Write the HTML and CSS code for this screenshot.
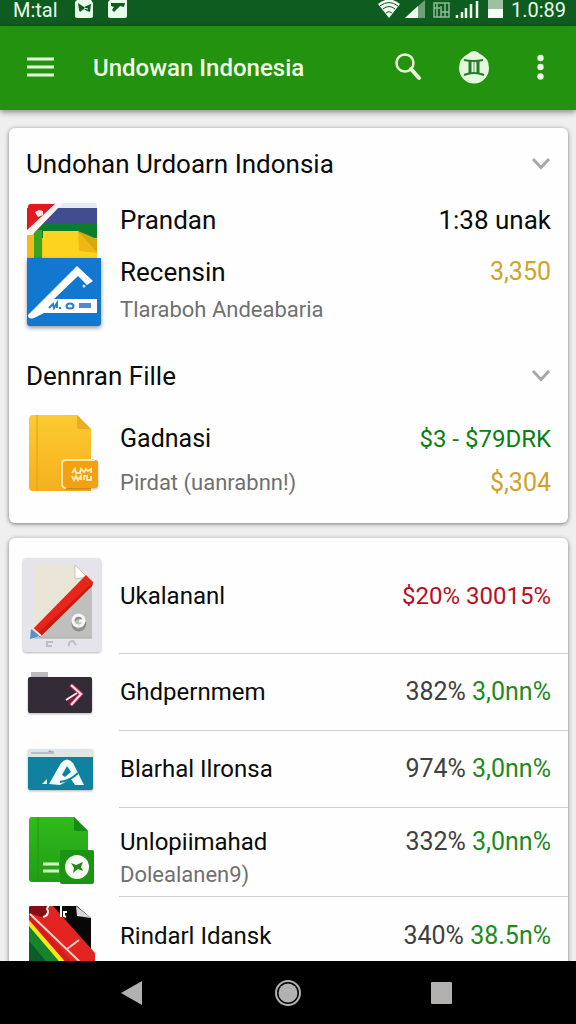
FILE: index.html
```html
<!DOCTYPE html>
<html lang="id">
<head>
<meta charset="utf-8">
<meta name="viewport" content="width=device-width, initial-scale=1">
<title>Undowan Indonesia</title>
<link rel="stylesheet" href="styles.css">
</head>
<body>
<div class="status">
  <span class="status-text">M:tal</span>
  <svg class="status-left" width="60" height="26" viewBox="70 0 60 26" aria-hidden="true">
    <path d="M77 0H91L93 3V16Q93 18 91 18H77Q75 18 75 16V2Z" fill="#e9fbe9"/>
    <path d="M78 3L84 7L91 4L90 12L87 11L84 9L80 12L79 10Z" fill="#0e5a20"/>
    <path d="M84 8L88 9" stroke="#e9fbe9"/>
    <path d="M110 0H127V16Q127 18 125 18H110Q108 18 108 16V2Z" fill="#e9fbe9"/>
    <path d="M111 3H125L124 7L120 6L117 9L114 12L112 10L114 7L111 6Z" fill="#0e5a20"/>
  </svg>
  <svg class="status-right" width="128" height="26" viewBox="376 0 128 26" aria-hidden="true">
    <path d="M378 4Q389 -5 400 4L389 18Z" fill="#f0fbf0"/>
    <path d="M380 6Q389 -1 398 6M383 9Q389 4 395 9M386 13Q389 10 392 13" fill="none" stroke="#0e5a20" stroke-width="1"/>
    <path d="M405 18L425 0V18Z" fill="#6fa07a"/><path d="M405 18L418 6V18Z" fill="#f0fbf0"/>
    <path d="M434 3H449V17H434ZM437 3V17M441 6V17M445 3V17M434 8H440M441 12H449" fill="none" stroke="#8dbb95" stroke-width="1.500"/>
    <path d="M457 18V15M462 18V12M466 18V8M471 18V4M477 18V1" stroke="#e9fbe9" stroke-width="2.500"/>
    <path d="M488 0H503V18H488Z" fill="#f5fff5"/><path d="M488 0H503V9H488Z" fill="#9fbfa5"/>
  </svg>
  <span class="status-text">1.0:89</span>
</div>

<header class="appbar">
  <button class="bar-button" aria-label="Menu">
    <svg width="30" height="30" viewBox="25 51 30 30"><path d="M27 57H54M27 65H54M27 73H54" stroke="#e8fbdc" stroke-width="3"/></svg>
  </button>
  <h1 class="title">Undowan Indonesia</h1>
  <div class="actions">
    <button class="bar-button" aria-label="Cari">
      <svg width="34" height="36" viewBox="391 48 34 36"><circle cx="404" cy="61" r="8.500" fill="none" stroke="#e8fbdc" stroke-width="2.500"/><path d="M410 67L418 76" stroke="#e8fbdc" stroke-width="4" stroke-linecap="round"/></svg>
    </button>
    <button class="bar-button" aria-label="Profil">
      <svg width="34" height="36" viewBox="458 49 34 36"><path d="M474 50Q477 50 480 53Q489 57 489 67A15 15.500 0 0 1 459 67Q459 57 468 53Q471 50 474 50Z" fill="#e4f8dc"/><path d="M464 59Q474 61 483 59M464 74Q474 70 484 74" fill="none" stroke="#26792a" stroke-width="2.200"/><path d="M470 60V72M478 60V72" stroke="#26792a" stroke-width="3"/><path d="M474 61V71" stroke="#5da158" stroke-width="1"/></svg>
    </button>
    <button class="bar-button" aria-label="Lainnya">
      <svg width="34" height="36" viewBox="524 49 34 36" fill="#e8fbdc"><circle cx="540.500" cy="57" r="3.200"/><circle cx="540.500" cy="66" r="3.200"/><circle cx="540.500" cy="75.500" r="3.200"/></svg>
    </button>
  </div>
</header>

<main class="content">
  <section class="card summary">
    <div class="heading">
      <h2 class="heading-text">Undohan Urdoarn Indonsia</h2>
      <button class="toggle" aria-label="Ciutkan bagian"><svg width="20" height="14" viewBox="0 0 20 14"><path d="M2 2L10 10.500L18 2" fill="none" stroke="#a8a8a8" stroke-width="3"/></svg></button>
    </div>
    <div class="group group-first">
      <svg class="icon" width="88" height="140" viewBox="18 194 88 140" aria-hidden="true">
        <path d="M30 203H96L97 206V260H27V206Q27 203 30 203Z" fill="#e6e9f5"/>
        <path d="M27 208H97V224H27Z" fill="#414d8e"/>
        <path d="M27 224H97V238H27Z" fill="#0b7d2c"/>
        <path d="M27 238H97V260H27Z" fill="#f7c51e"/>
        <path d="M43 231H78L97 253V260H43Z" fill="#fed31e"/>
        <path d="M78 231L97 239V253Z" fill="#d4a90d"/>
        <path d="M78 231L79 251L97 253Z" fill="#edb914"/>
        <path d="M34 230H42V260H34Z" fill="#39a51f"/>
        <path d="M27 235L34 230V260H27Z" fill="#f3bc1b"/>
        <path d="M31 204H60L28 234V207Q28 204 31 204Z" fill="#e11820"/>
        <path d="M56 203H63L32 235L27 235V230Z" fill="#fff4f2"/>
        <path d="M35 212L39 210L43 211L43 215L38 217L36 214Z" fill="#ffe8e4"/>
        <path class="drop" d="M27 258H101V323Q101 326 98 326H30Q27 326 27 323Z" fill="#1277cf"/>
        <path d="M28 315L77 266L93 281L87 285L78 276L54 299H97V313H44L34 318Q28 320 28 315Z" fill="#fff"/>
        <path d="M49 308L53 304L54 308L57 303V308M59 308H61" fill="none" stroke="#2580c8" stroke-width="2"/>
        <ellipse cx="70" cy="306" rx="3.500" ry="2.500" fill="none" stroke="#2580c8" stroke-width="2"/>
        <path d="M79 303H91V308H79Z" fill="#4b8dcc"/><circle cx="84" cy="286" r="1.500" fill="#cfe8ff"/>
      </svg>
      <div class="lines">
        <div class="line line-tall"><span class="name">Prandan</span><span class="value value-main">1:38 unak</span></div>
        <div class="line line-tall"><span class="name">Recensin</span><span class="value gold">3,350</span></div>
        <div class="sub">Tlaraboh Andeabaria</div>
      </div>
    </div>
    <div class="heading">
      <h2 class="heading-text">Dennran Fille</h2>
      <button class="toggle" aria-label="Ciutkan bagian"><svg width="20" height="14" viewBox="0 0 20 14"><path d="M2 2L10 10.500L18 2" fill="none" stroke="#a8a8a8" stroke-width="3"/></svg></button>
    </div>
    <div class="group group-second">
      <svg class="icon" width="88" height="90" viewBox="18 408 88 90" aria-hidden="true">
        <defs><linearGradient id="gold" x1="0" y1="0" x2="0" y2="1"><stop offset="0" stop-color="#fccb30"/><stop offset="1" stop-color="#f5b01f"/></linearGradient></defs>
        <path d="M33 415H77L91 429V491H33Q29 491 29 487V419Q29 415 33 415Z" fill="url(#gold)"/>
        <path d="M37 415V491" stroke="#dfa11a"/><path d="M77 415L91 429H80Q77 429 77 426Z" fill="#e9ad20"/>
        <path class="drop-soft" d="M66 460H95Q98 460 98 463V485Q98 488 95 488H66Q62 488 62 484V464Q62 460 66 460Z" fill="#f3a013"/>
        <path d="M95 460H66Q62 460 62 464V484Q62 488 66 488" fill="none" stroke="#ffe7a3" stroke-width="2"/>
        <path d="M72 473L75 469L76 473H80L81 469L84 472L86 469L88 471L91 469V473M72 476L74 480L76 476L78 480L81 476V480M84 480V476H87V480H91V476" fill="none" stroke="#ffe9b0" stroke-width="2"/>
      </svg>
      <div class="lines">
        <div class="line line-mid"><span class="name name-small">Gadnasi</span><span class="value value-small green-deep">$3 - $79DRK</span></div>
        <div class="line line-low"><span class="sub">Pirdat (uanrabnn!)</span><span class="value gold">$,304</span></div>
      </div>
    </div>
  </section>

  <ul class="card list">
    <li class="row row-large">
      <svg class="icon" width="88" height="116" viewBox="18 538 88 116" aria-hidden="true">
        <rect class="drop-soft" x="23" y="558" width="78" height="94" rx="4" fill="#e4e4ea"/>
        <path d="M34 565H75L92 580V638H34Z" fill="#e9e6d8"/><path d="M92 583V638H40Z" fill="#bfbfbd"/>
        <path d="M75 565L87 577L75 579Z" fill="#fffef8" stroke="#cbc8b8" stroke-width="1"/>
        <path d="M34 638H92" stroke="#aaa9a5"/>
        <path d="M86 575L93 582L92 586L40 637L32 630Z" fill="#e92418"/><path d="M93 582L92 586L40 637L37 634Z" fill="#c81b12"/>
        <path d="M31 629L40 636L30 639Z" fill="#5a8fc8"/><path d="M32 628L41 636" stroke="#e8e8f0" stroke-width="2"/>
        <path d="M84 618H79Q73 618 73 623Q73 630 79 630Q85 629 85 622" fill="none" stroke="#8f8f8f" stroke-width="3"/>
        <path d="M83 621H79M79 626Q73 626 73 620Q74 615 79 615Q84 616 84 621Q83 626 79 626" fill="none" stroke="#f6f6f6" stroke-width="3"/>
        <path d="M53 642H47V646H52M69 646Q68 641 73 641L76 645" fill="none" stroke="#bdbdc2" stroke-width="2"/>
      </svg>
      <div class="row-body"><span class="name name-list">Ukalananl</span><span class="value value-small red">$20% 30015%</span></div>
    </li>
    <li class="row row-medium">
      <svg class="icon" width="88" height="48" viewBox="18 669 88 48" aria-hidden="true">
        <path d="M31 672H48V678H31Z" fill="#b9bbbd"/><rect class="drop-soft" x="28" y="677" width="64" height="36" rx="2" fill="#332c37"/>
        <path d="M66 700L77 693L70 704Z" fill="#8a1641"/>
        <path d="M71 685L81 694L71 705" fill="none" stroke="#c2335c" stroke-width="4"/><path d="M71 685L81 694L71 705M66 700L77 693" fill="none" stroke="#ffe4ec" stroke-width="2"/>
      </svg>
      <div class="row-body"><span class="name name-list">Ghdpernmem</span><span class="value"><span class="grey">382%</span> <span class="green">3,0nn%</span></span></div>
    </li>
    <li class="row row-medium">
      <svg class="icon" width="88" height="48" viewBox="18 745 88 48" aria-hidden="true">
        <rect class="drop-soft" x="28" y="748" width="65" height="41" rx="2" fill="#dfe5e8"/><path d="M28 756H93V787Q93 789 91 789H30Q28 789 28 787Z" fill="#10819f"/>
        <path d="M31 752H48M49 753V750H51V753M53 750V753" fill="none" stroke="#8d989c" stroke-width="1"/>
        <path d="M49 783L61 762Q67 755 73 762L84 784H75L71 778L60 784Z" fill="#f4ffff"/><path d="M62 774L67 765L71 771L65 776Z" fill="#10819f"/>
        <path d="M60 781Q70 780 78 772" fill="none" stroke="#10819f" stroke-width="2"/><path d="M42 783L47 778V783Z" fill="#e3faff"/>
      </svg>
      <div class="row-body"><span class="name name-list">Blarhal Ilronsa</span><span class="value"><span class="grey">974%</span> <span class="green">3,0nn%</span></span></div>
    </li>
    <li class="row row-double">
      <svg class="icon" width="88" height="76" viewBox="18 815 88 76" aria-hidden="true">
        <defs><linearGradient id="leaf" x1="0" y1="0" x2="0" y2="1"><stop offset="0" stop-color="#31bb1c"/><stop offset="1" stop-color="#219d14"/></linearGradient></defs>
        <path d="M32 817H74L88 831V882H32Q29 882 29 879V820Q29 817 32 817Z" fill="url(#leaf)"/>
        <path d="M38 817V882" stroke="#25980f"/><path d="M74 817L88 831H76Q74 831 74 829Z" fill="#168d12"/>
        <rect x="60" y="850" width="34" height="34" rx="2" fill="#1b9411"/>
        <path d="M43 864H59M43 871H59" stroke="#d9ffca" stroke-width="3"/>
        <circle cx="77" cy="867" r="12" fill="#f6fff2"/>
        <path d="M71 863L76 865L83 862L81 867L83 871L78 869L73 873L74 868Z" fill="#26851d"/>
      </svg>
      <div class="row-body">
        <div class="pair"><span class="name name-list">Unlopiimahad</span><span class="sub">Dolealanen9)</span></div>
        <span class="value"><span class="grey">332%</span> <span class="green">3,0nn%</span></span>
      </div>
    </li>
    <li class="row row-medium">
      <svg class="icon" width="88" height="74" viewBox="18 899 88 74" aria-hidden="true">
        <path d="M31 906H77L91 918V973H29V908Q29 906 31 906Z" fill="#080606"/>
        <path d="M29 908Q29 906 31 906H53L95 953V973H77L29 919Z" fill="#e32420"/>
        <path d="M29 908Q29 906 31 906H50L44 918L29 913Z" fill="#850e14"/>
        <path d="M29 913L82 973H65L29 930Z" fill="#d31c1b"/><path d="M29 920L75 973H29Z" fill="#fbe71a"/><path d="M29 926L69 973H29Z" fill="#15842a"/><path d="M29 941L56 973H29Z" fill="#0b5c2a"/>
        <path d="M30 914L80 962M67 949L79 940" fill="none" stroke="#ffd2c9" stroke-width="2"/>
        <path d="M49 906Q46 908 48 911Q48 916 43 917M61 906V917M64 911V916L66 917M63 912H67" fill="none" stroke="#fff" stroke-width="2"/>
        <path d="M76 906L91 918L77 916Z" fill="#d7d7d7"/>
      </svg>
      <div class="row-body"><span class="name name-list">Rindarl Idansk</span><span class="value"><span class="grey">340%</span> <span class="green">38.5n%</span></span></div>
    </li>
  </ul>
</main>

<nav class="navbar" aria-label="Sistem">
  <button class="nav-button" aria-label="Kembali"><svg width="28" height="28" viewBox="0 0 28 28"><path d="M24 2V26L3 14Z" fill="#b3b0b0"/></svg></button>
  <button class="nav-button" aria-label="Beranda"><svg width="28" height="28" viewBox="0 0 28 28"><circle cx="14" cy="14" r="12" fill="none" stroke="#b3b0b0" stroke-width="2"/><circle cx="14" cy="14" r="9.500" fill="#b3b0b0"/></svg></button>
  <button class="nav-button" aria-label="Terbaru"><svg width="28" height="28" viewBox="0 0 28 28"><rect x="1" y="3" width="21" height="22" rx="1" fill="#b3b0b0"/></svg></button>
</nav>
</body>
</html>
```

FILE: styles.css
```css
* { box-sizing: border-box; }

body {
  margin: 0;
  height: 100vh;
  display: flex;
  flex-direction: column;
  background: #efefef;
  color: #0b0b0b;
  font-family: Roboto, "Liberation Sans", sans-serif;
}

button {
  display: flex;
  margin: 0;
  padding: 0;
  border: 0;
  background: none;
  cursor: pointer;
}

svg { display: block; flex: none; }

h1, h2 { margin: 0; font-weight: 400; }

.status {
  flex: none;
  height: 26px;
  padding: 0 10px 0 13px;
  display: flex;
  align-items: center;
  background: #0f5c21;
  color: #e9fbe9;
  font-size: 20px;
  line-height: 20px;
}
.status-text { padding-bottom: 6px; }
.status-left { margin-left: 12px; }
.status-right { margin-left: auto; margin-right: 7px; }

.appbar {
  flex: none;
  z-index: 1;
  height: 84px;
  padding: 0 18px 0 25px;
  display: flex;
  align-items: center;
  background: #23920f;
  box-shadow: 0 2px 6px rgba(0, 0, 0, 0.45);
}
.title {
  margin-left: 38px;
  color: #f0ffe6;
  font-size: 24px;
  line-height: 32px;
  font-weight: 500;
}
.actions {
  margin-left: auto;
  display: flex;
  gap: 32px;
}

.content {
  flex: 1;
  min-height: 0;
  padding: 18px 8px 0 9px;
  display: flex;
  flex-direction: column;
  gap: 15px;
  overflow: hidden auto;
  scrollbar-width: none;
}

.card {
  flex: none;
  margin: 0;
  border-radius: 6px;
  background: #fdfefd;
  box-shadow: 0 1px 4px rgba(0, 0, 0, 0.5);
}
.summary { padding: 14px 17px 19px 9px; }

.heading {
  height: 44px;
  padding-left: 8px;
  display: flex;
  align-items: center;
  justify-content: space-between;
}
.heading-text { font-size: 26px; line-height: 32px; }

.group { display: flex; }
.group-first { padding-top: 8px; margin-bottom: 20px; }
.group-second { padding-top: 10px; }
.group-second .lines { padding-top: 8px; }

.lines { flex: 1; margin-left: 14px; }
.line {
  display: flex;
  align-items: center;
  justify-content: space-between;
}
.line-tall { height: 52px; }
.line-mid { height: 46px; }
.line-low { height: 42px; }

.name { font-size: 26px; line-height: 34px; }
.name-small { font-size: 25px; }
.name-list { font-size: 24px; }
.sub { color: #707070; font-size: 22px; line-height: 24px; }

.value { font-size: 25px; line-height: 34px; white-space: nowrap; }
.value-main { font-size: 26px; }
.value-small { font-size: 24px; }
.gold { color: #cfa32b; }
.green-deep { color: #0c800c; }
.green { color: #1d8a1d; }
.grey { color: #404040; }
.red { color: #b80f24; }

.list { padding: 0; list-style: none; }
.row {
  padding-left: 9px;
  display: flex;
  align-items: center;
}
.row-body {
  flex: 1;
  align-self: stretch;
  margin-left: 13px;
  padding: 0 17px 0 1px;
  display: flex;
  align-items: center;
  justify-content: space-between;
  border-bottom: 1px solid #cfd1d2;
}
.row:last-child .row-body { border-bottom: 0; }
.row-large { min-height: 116px; }
.row-medium { min-height: 77px; }
.row-double { min-height: 89px; }
.row-double .row-body { align-items: flex-start; padding-top: 17px; }
.pair { display: flex; flex-direction: column; gap: 4px; }

.drop { filter: drop-shadow(0 2px 2px rgba(0, 0, 0, 0.4)); }
.drop-soft { filter: drop-shadow(0 1px 1px rgba(0, 0, 0, 0.3)); }

.navbar {
  flex: none;
  z-index: 1;
  height: 63px;
  padding: 0 54px;
  display: grid;
  grid-template-columns: repeat(3, 1fr);
  place-items: center;
  background: #000;
}
```
